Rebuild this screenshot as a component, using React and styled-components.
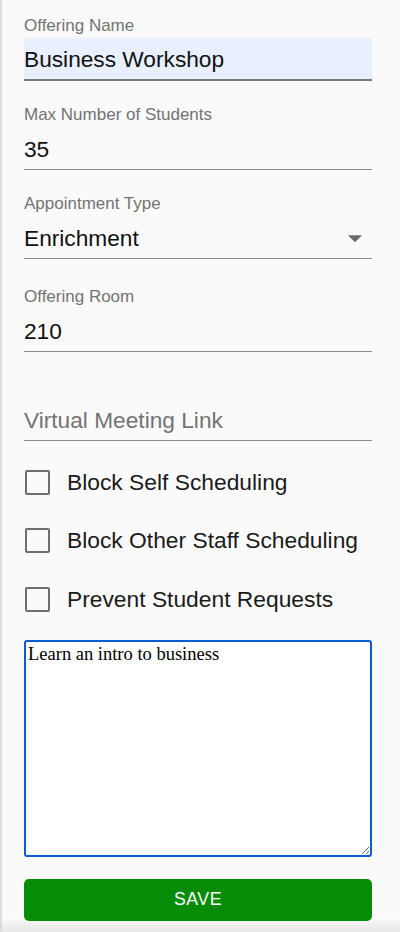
import styled, { createGlobalStyle } from "styled-components";

const GlobalStyle = createGlobalStyle`
  html, body {
    margin: 0;
    padding: 0;
    background: #fafafa;
  }
  body {
    font-family: "Liberation Sans", Arial, sans-serif;
  }
`;

const Page = styled.div`
  min-height: 932px;
  box-sizing: border-box;
  border-left: 2px solid #dcdcdc;
  padding: 0 28px 0 22px;
  background: linear-gradient(to bottom, #fafafa 0, #fafafa 918px, #e6e6e6 932px);
`;

const Form = styled.form`
  width: 348px;
  display: flex;
  flex-direction: column;
  padding-top: 16px;
`;

const Field = styled.div`
  display: flex;
  flex-direction: column;
  gap: 2px;
  margin-top: ${(p) => p.$gap || 0}px;
`;

const Label = styled.label`
  height: 20px;
  line-height: 20px;
  font-size: 17px;
  color: #737373;
`;

const InputRow = styled.div`
  position: relative;
  height: 43px;
  box-sizing: border-box;
  display: flex;
  align-items: center;
  border-bottom: ${(p) => (p.$filled ? "2px solid #7a7a7a" : "1.5px solid #8c8c8c")};
  background: ${(p) => (p.$filled ? "#e8f0fe" : "transparent")};
`;

const Value = styled.span`
  font-size: 22.7px;
  padding-top: 2px;
  color: ${(p) => (p.$placeholder ? "#737373" : "#111")};
`;

const Arrow = styled.svg`
  position: absolute;
  right: 0;
  top: 5px;
  width: 34px;
  height: 34px;
  fill: #6b6b6b;
`;

const Checks = styled.div`
  display: flex;
  flex-direction: column;
  margin-top: 12px;
`;

const CheckRow = styled.label`
  height: 58.5px;
  display: flex;
  align-items: center;
  gap: 17px;
  font-size: 22.8px;
  color: #1a1a1a;
`;

const Box = styled.span`
  width: 25px;
  height: 25px;
  box-sizing: border-box;
  margin-left: 1px;
  border: 2.6px solid #6e6e6e;
  border-radius: 2px;
`;

const Notes = styled.textarea`
  margin-top: 11px;
  height: 217px;
  box-sizing: border-box;
  width: 348px;
  padding: 2px 2px;
  border: 2.5px solid #0b5bd3;
  border-radius: 3px;
  background: #fff;
  font-family: "Liberation Serif", "Times New Roman", serif;
  font-size: 18.5px;
  color: #000;
  outline: none;
  resize: both;
`;

const SaveButton = styled.button`
  margin-top: 22px;
  height: 42px;
  width: 348px;
  border: none;
  border-radius: 5px;
  background: #068c06;
  color: #fff;
  font-family: "Liberation Sans", Arial, sans-serif;
  font-size: 17.8px;
  letter-spacing: 0.5px;
  text-transform: uppercase;
`;

function TextField({ label, value, filled, gap, placeholder }) {
  return (
    <Field $gap={gap}>
      <Label>{label}</Label>
      <InputRow $filled={filled}>
        <Value $placeholder={placeholder}>{value}</Value>
      </InputRow>
    </Field>
  );
}

const checks = [
  "Block Self Scheduling",
  "Block Other Staff Scheduling",
  "Prevent Student Requests",
];

export default function App() {
  return (
    <>
      <GlobalStyle />
      <Page>
        <Form onSubmit={(e) => e.preventDefault()}>
          <TextField label="Offering Name" value="Business Workshop" filled />
          <TextField label="Max Number of Students" value="35" gap={24} />
          <Field $gap={24}>
            <Label>Appointment Type</Label>
            <InputRow>
              <Value>Enrichment</Value>
              <Arrow viewBox="0 0 24 24">
                <path d="M7 10l5 5 5-5z" />
              </Arrow>
            </InputRow>
          </Field>
          <TextField label="Offering Room" value="210" gap={28} />
          <TextField label="" value="Virtual Meeting Link" gap={24} placeholder />
          <Checks>
            {checks.map((c) => (
              <CheckRow key={c}>
                <Box />
                {c}
              </CheckRow>
            ))}
          </Checks>
          <Notes defaultValue="Learn an intro to business" />
          <SaveButton type="submit">Save</SaveButton>
        </Form>
      </Page>
    </>
  );
}
